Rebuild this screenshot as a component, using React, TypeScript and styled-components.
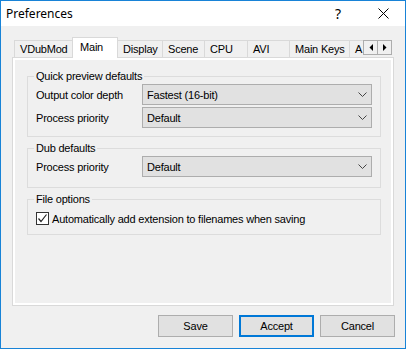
import React from "react";
import styled, { createGlobalStyle } from "styled-components";

const GlobalStyle = createGlobalStyle`
  body {
    margin: 0;
    background: #ffffff;
    font-family: "Liberation Sans", Arial, sans-serif;
  }
`;

const Window = styled.div`
  width: 406px;
  height: 349px;
  box-sizing: border-box;
  border: 1px solid #1883d7;
  background: #f0f0f0;
  display: flex;
  flex-direction: column;
  color: #000;
  font-size: 11px;
  letter-spacing: -0.2px;
`;

const TitleBar = styled.div`
  height: 25px;
  flex: none;
  background: #ffffff;
  display: flex;
  align-items: center;
  padding-left: 5px;
  letter-spacing: 0;
`;

const Title = styled.div`
  flex: 1;
  font-family: "Noto Sans", "Open Sans", sans-serif;
  font-size: 12px;
  line-height: 16px;
`;

const CaptionButton = styled.div<{ $width: number }>`
  width: ${(p) => p.$width}px;
  height: 25px;
  display: flex;
  align-items: center;
  justify-content: center;
  font-family: "Noto Sans", sans-serif;
  font-size: 14px;
`;

const Body = styled.div`
  flex: 1;
  display: flex;
  flex-direction: column;
  padding: 11px;
  min-height: 0;
`;

const TabStrip = styled.div`
  height: 21px;
  display: flex;
  flex: none;
`;

const TabTrack = styled.div`
  width: 351px;
  height: 21px;
  display: flex;
  overflow: hidden;
  padding-left: 2px;
  box-sizing: border-box;
`;

const Tab = styled.div<{ $active?: boolean; $width: number }>`
  position: relative;
  z-index: ${(p) => (p.$active ? 2 : 1)};
  flex: none;
  box-sizing: border-box;
  width: ${(p) => p.$width + 1}px;
  margin-right: -1px;
  margin-top: ${(p) => (p.$active ? 0 : 3)}px;
  height: ${(p) => (p.$active ? 21 : 17)}px;
  border: 1px solid #d9d9d9;
  border-bottom: none;
  background: ${(p) => (p.$active ? "#ffffff" : "#f0f0f0")};
  padding: ${(p) => (p.$active ? "3px 0 0 7px" : "2px 0 0 5px")};
  line-height: 13px;
  white-space: nowrap;
`;

const Spin = styled.div`
  display: flex;
  margin-top: 3px;
`;

const SpinButton = styled.div`
  width: 15px;
  height: 15px;
  box-sizing: border-box;
  border: 1px solid #adadad;
  margin-right: -1px;
  background: #f0f0f0;
  display: flex;
  align-items: center;
  justify-content: center;
`;

const Panel = styled.div`
  flex: 1;
  margin-top: -1px;
  border: 1px solid #d9d9d9;
  box-shadow: inset 0 0 0 2px #ffffff;
  padding: 12px 12px 0 14px;
  display: flex;
  flex-direction: column;
  gap: 5px;
`;

const Group = styled.fieldset<{ $padBottom: number }>`
  margin: 0;
  min-width: 0;
  border: 1px solid #dcdcdc;
  padding: 1px 8px ${(p) => p.$padBottom}px 8px;
  display: flex;
  flex-direction: column;
  gap: 2px;
`;

const Legend = styled.legend`
  padding: 0 2px;
  margin-left: -2px;
  line-height: 13px;
  font-size: 11px;
`;

const Row = styled.div`
  display: grid;
  grid-template-columns: 106px 1fr;
  align-items: center;
  height: 21px;
`;

const Combo = styled.div`
  height: 21px;
  box-sizing: border-box;
  border: 1px solid #adadad;
  background: #e1e1e1;
  display: flex;
  align-items: center;
  justify-content: space-between;
  padding: 0 4px;
`;

const CheckRow = styled.label`
  display: flex;
  align-items: center;
  gap: 3px;
  margin-top: 5px;
  height: 13px;
`;

const CheckBox = styled.span`
  width: 13px;
  height: 13px;
  box-sizing: border-box;
  border: 1px solid #333333;
  background: #ffffff;
  display: flex;
  align-items: center;
  justify-content: center;
`;

const Footer = styled.div`
  display: flex;
  justify-content: flex-end;
  gap: 6px;
  margin-top: 9px;
  margin-right: -1px;
  flex: none;
`;

const Button = styled.div<{ $default?: boolean }>`
  width: 75px;
  height: 22px;
  box-sizing: border-box;
  border: ${(p) => (p.$default ? "2px solid #0078d7" : "1px solid #adadad")};
  background: #e1e1e1;
  display: flex;
  align-items: center;
  justify-content: center;
`;

const Chevron = () => (
  <svg width="9" height="5" viewBox="0 0 9 5">
    <polyline points="0.5,0.5 4.5,4.5 8.5,0.5" fill="none" stroke="#444" strokeWidth="1" />
  </svg>
);

const tabs = [
  { label: "VDubMod", width: 58 },
  { label: "Main", width: 45, active: true },
  { label: "Display", width: 45 },
  { label: "Scene", width: 42 },
  { label: "CPU", width: 43 },
  { label: "AVI", width: 42 },
  { label: "Main Keys", width: 60 },
  { label: "A", width: 40 },
];

export default function App() {
  return (
    <>
      <GlobalStyle />
      <Window>
        <TitleBar>
          <Title>Preferences</Title>
          <CaptionButton $width={46}>?</CaptionButton>
          <CaptionButton $width={44}>
            <svg width="11" height="11" viewBox="0 0 11 11">
              <path d="M0.5 0.5 L10.5 10.5 M10.5 0.5 L0.5 10.5" stroke="#000" strokeWidth="1" />
            </svg>
          </CaptionButton>
        </TitleBar>
        <Body>
          <TabStrip>
            <TabTrack>
              {tabs.map((t) => (
                <Tab key={t.label} $active={t.active} $width={t.width}>
                  {t.label}
                </Tab>
              ))}
            </TabTrack>
            <Spin>
              <SpinButton>
                <svg width="4" height="7" viewBox="0 0 4 7">
                  <polygon points="4,0 4,7 0.5,3.5" fill="#000" />
                </svg>
              </SpinButton>
              <SpinButton>
                <svg width="4" height="7" viewBox="0 0 4 7">
                  <polygon points="0,0 0,7 3.5,3.5" fill="#000" />
                </svg>
              </SpinButton>
            </Spin>
          </TabStrip>
          <Panel>
            <Group $padBottom={8}>
              <Legend>Quick preview defaults</Legend>
              <Row>
                <span>Output color depth</span>
                <Combo>
                  <span>Fastest (16-bit)</span>
                  <Chevron />
                </Combo>
              </Row>
              <Row>
                <span>Process priority</span>
                <Combo>
                  <span>Default</span>
                  <Chevron />
                </Combo>
              </Row>
            </Group>
            <Group $padBottom={10}>
              <Legend>Dub defaults</Legend>
              <Row>
                <span>Process priority</span>
                <Combo>
                  <span>Default</span>
                  <Chevron />
                </Combo>
              </Row>
            </Group>
            <Group $padBottom={9}>
              <Legend>File options</Legend>
              <CheckRow>
                <CheckBox>
                  <svg width="11" height="11" viewBox="0 0 11 11">
                    <polyline points="1.5,5.5 4,8.5 9.5,1.5" fill="none" stroke="#222" strokeWidth="1.2" />
                  </svg>
                </CheckBox>
                <span>Automatically add extension to filenames when saving</span>
              </CheckRow>
            </Group>
          </Panel>
          <Footer>
            <Button>Save</Button>
            <Button $default>Accept</Button>
            <Button>Cancel</Button>
          </Footer>
        </Body>
      </Window>
    </>
  );
}
